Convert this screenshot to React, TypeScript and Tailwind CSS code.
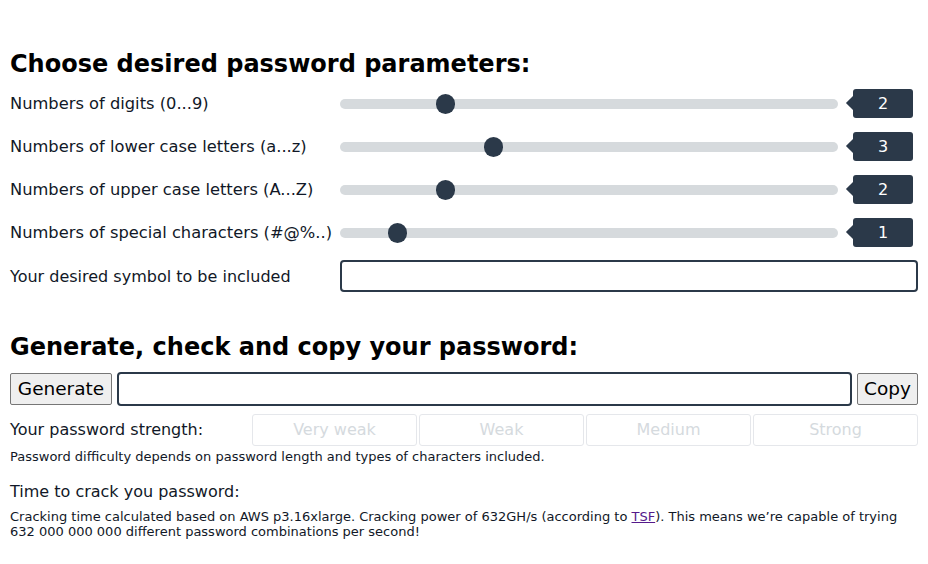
import React from "react";

const sliders = [
  { label: "Numbers of digits (0...9)", value: 2 },
  { label: "Numbers of lower case letters (a...z)", value: 3 },
  { label: "Numbers of upper case letters (A...Z)", value: 2 },
  { label: "Numbers of special characters (#@%..)", value: 1 },
];

function Slider({ value }: { value: number }) {
  return (
    <div className="flex items-center flex-1">
      <div className="relative h-[10px] w-[498px] rounded-full bg-[#d6dadd]">
        <div
          className="absolute top-[-5px] h-[20px] w-[19px] rounded-full bg-[#2b3949]"
          style={{ left: value * 48 }}
        />
      </div>
      <div className="relative ml-[15px] flex h-[29px] w-[60px] items-center justify-center rounded-[3px] bg-[#2b3949] text-[16px] text-white">
        <div className="absolute left-[-5px] top-[9px] h-[10px] w-[10px] rotate-45 bg-[#2b3949]" />
        <span className="relative">{value}</span>
      </div>
    </div>
  );
}

export default function App() {
  return (
    <div
      className="w-[928px] h-[564px] bg-white px-[10px] pt-[48px] text-[#111827]"
      style={{ fontFamily: '"DejaVu Sans", Verdana, sans-serif' }}
    >
      <h1 className="text-[24px] font-bold leading-[32px] text-black">
        Choose desired password parameters:
      </h1>
      <div className="mt-[3px] flex flex-col">
        {sliders.map((s) => (
          <div key={s.label} className="flex h-[43px] items-center">
            <div className="w-[330px] text-[16.3px] whitespace-nowrap">{s.label}</div>
            <div className="flex flex-1 -translate-y-px items-center">
              <Slider value={s.value} />
            </div>
          </div>
        ))}
        <div className="flex h-[43px] items-center">
          <div className="w-[330px] text-[16px] whitespace-nowrap">Your desired symbol to be included</div>
          <div className="h-[32px] w-[578px] -translate-y-px rounded-[4px] border-2 border-[#2b3949]" />
        </div>
      </div>

      <h2 className="mt-[33px] text-[24px] font-bold leading-[32px] text-black">
        Generate, check and copy your password:
      </h2>
      <div className="mt-[9px] flex items-center gap-[5px]">
        <button className="h-[32px] w-[102px] rounded-[2px] border border-[#767676] bg-[#efefef] text-[18.5px] text-black">
          Generate
        </button>
        <div className="h-[34px] flex-1 rounded-[4px] border-2 border-[#2b3949]" />
        <button className="h-[32px] w-[61px] rounded-[2px] border border-[#767676] bg-[#efefef] text-[18.5px] text-black">
          Copy
        </button>
      </div>
      <div className="mt-[8px] flex items-center">
        <div className="w-[242px] text-[16px]">Your password strength:</div>
        <div className="grid flex-1 grid-cols-4 gap-[2px]">
          {["Very weak", "Weak", "Medium", "Strong"].map((t) => (
            <div
              key={t}
              className="flex h-[32px] items-center justify-center rounded-[3px] border border-[#e5e7eb] text-[16px] text-[#d5dade]"
            >
              {t}
            </div>
          ))}
        </div>
      </div>
      <p className="mt-[3px] text-[13px] leading-[16px]">
        Password difficulty depends on password length and types of characters included.
      </p>
      <p className="mt-[15px] text-[16px]">Time to crack you password:</p>
      <p className="mt-[5px] text-[13px] leading-[15px] pr-[10px]">
        Cracking time calculated based on AWS p3.16xlarge. Cracking power of 632GH/s (according to{" "}
        <a className="text-[#551a8b] underline">TSF</a>). This means we’re capable of trying 632 000 000 000
        different password combinations per second!
      </p>
    </div>
  );
}
